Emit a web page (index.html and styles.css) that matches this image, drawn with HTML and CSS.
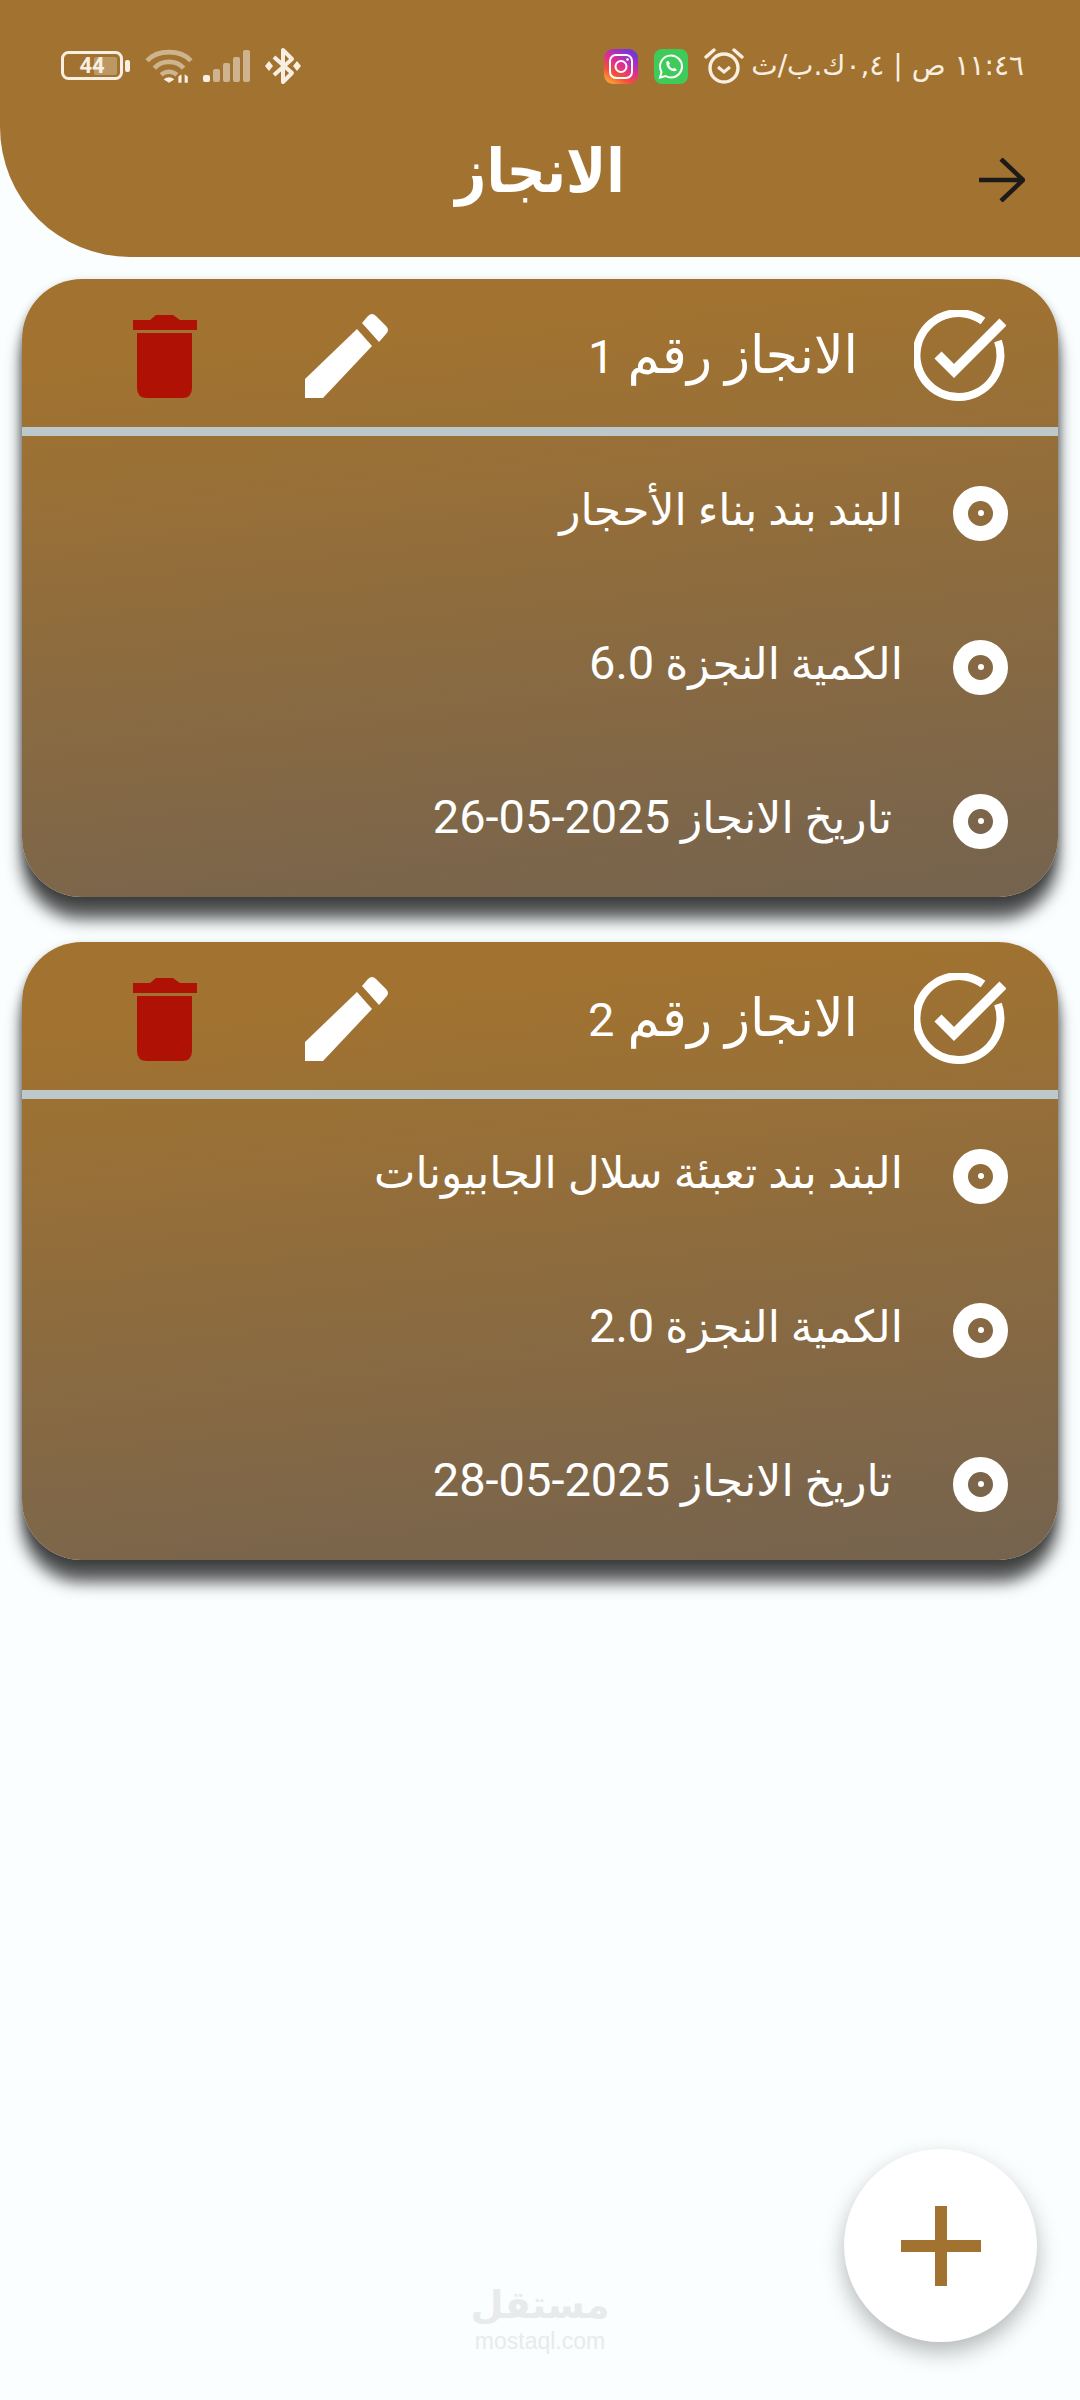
FILE: index.html
```html
<!DOCTYPE html>
<html lang="ar">
<head>
<meta charset="utf-8">
<title>الانجاز</title>
<link rel="stylesheet" href="styles.css">
</head>
<body>
<div class="screen">
  <header class="appbar">
    <div class="status">
      <div class="status-left">
        <svg class="i-battery" viewBox="0 0 70 30"><rect x="1.500" y="1.500" width="59" height="26" rx="6" fill="none" stroke="#f8efe2" stroke-width="3"/><rect x="33" y="6" width="23" height="18" rx="2" fill="#f8efe2" opacity=".3"/><rect x="64" y="9" width="5" height="12" rx="2" fill="#f8efe2"/><text x="31" y="22" text-anchor="middle" class="batt-text">44</text></svg>
        <svg class="i-wifi" viewBox="0 0 46 34"><g fill="none" stroke="#cdb48e" stroke-width="4.500"><path d="M2 12 C12 1 34 1 44 12"/><path d="M9 19 C16 11 30 11 37 19"/></g><path d="M14 24 C19 19 27 19 32 24 L29 27 C25 24 21 24 17 27Z" fill="#cdb48e"/><path d="M18 30 C21 27 25 27 28 30 L23 33Z" fill="#f8efe2"/><path d="M32 33 L32 27 L35 25 L35 33Z M38 33 L38 25 L41 27 L41 33Z" fill="#f8efe2"/></svg>
        <svg class="i-signal" viewBox="0 0 47 32"><rect x="0" y="25" width="7" height="7" rx="2" fill="#f8efe2"/><rect x="10" y="19" width="7" height="13" rx="2" fill="#cdb48e"/><rect x="20" y="13" width="7" height="19" rx="2" fill="#cdb48e"/><rect x="30" y="7" width="7" height="25" rx="2" fill="#cdb48e"/><rect x="40" y="0" width="7" height="32" rx="2" fill="#cdb48e"/></svg>
        <svg class="i-bt" viewBox="0 0 36 38"><path d="M9 10 L27 26 L18 35 L18 3 L27 12 L9 28" fill="none" stroke="#f8efe2" stroke-width="4" stroke-linejoin="round"/><path d="M4 14 L8 19 L4 24 L0 19Z M32 14 L36 19 L32 24 L28 19Z" fill="#f8efe2"/></svg>
      </div>
      <div class="status-right">
        <svg class="i-app" viewBox="0 0 34 35"><defs><linearGradient id="ig" x1="0" y1="1" x2=".6" y2="0"><stop offset="0" stop-color="#fdc12f"/><stop offset=".35" stop-color="#f5503a"/><stop offset=".65" stop-color="#d92e97"/><stop offset="1" stop-color="#7a35d8"/></linearGradient></defs><rect width="34" height="35" rx="9" fill="url(#ig)"/><rect x="6" y="6" width="22" height="23" rx="6" fill="none" stroke="#fff" stroke-width="2"/><circle cx="17" cy="17.500" r="5.500" fill="none" stroke="#fff" stroke-width="2"/><circle cx="23.500" cy="10.500" r="1.300" fill="#fff"/></svg>
        <svg class="i-app" viewBox="0 0 34 35"><rect width="34" height="35" rx="8" fill="#3ecb5a"/><path d="M17 6.500 a11 11 0 0 1 0 22 a11 11 0 0 1 -5.500 -1.500 L6 28.500 L7.500 23 a11 11 0 0 1 9.500 -16.500Z" fill="none" stroke="#fff" stroke-width="2"/><path d="M13 12 C11.500 14 12.500 17 15 20 C18 22.500 21 23 23 21 L20.500 18.800 L19 19.800 C17 19 15.500 17.500 15 16 L16 14.800 L14.500 12Z" fill="#fff"/></svg>
        <svg class="i-alarm" viewBox="0 0 40 38"><circle cx="20" cy="21" r="14" fill="none" stroke="#f8efe2" stroke-width="3.400"/><path d="M14 20 L20 25 L26 20" fill="none" stroke="#f8efe2" stroke-width="3"/><path d="M2 10 L10 3 M38 10 L30 3" stroke="#f8efe2" stroke-width="3.400" stroke-linecap="round"/></svg>
        <span class="status-text" dir="rtl">١١:٤٦ ص | ٠,٤ك.ب/ث</span>
      </div>
    </div>
    <div class="titlebar">
      <span></span>
      <h1 class="title" dir="rtl">الانجاز</h1>
      <svg class="i-arrow" viewBox="0 0 46 44"><path d="M0 22 H43 M22 1 L44 22 L22 43" fill="none" stroke="#1c1b1a" stroke-width="4.500"/></svg>
    </div>
  </header>

  <main class="list">
    <article class="card">
      <div class="card-head">
        <svg class="i-check" viewBox="0 0 92 92"><path d="M69 11 A42 42 0 1 0 84 31" fill="none" stroke="#fff" stroke-width="8"/><path d="M24 45 L40 61 L89 12" fill="none" stroke="#fff" stroke-width="10"/></svg>
        <h2 class="card-title">الانجاز رقم <bdi class="num">1</bdi></h2>
        <svg class="i-pencil" viewBox="0 0 83 84"><path d="M0 65 L52 15 L67 32 L18 84 L0 84Z" fill="#fff"/><path d="M57 9 L63 2 Q67 -2 71 2 L81 12 Q85 16 81 20 L74 28Z" fill="#fff"/></svg>
        <svg class="i-trash" viewBox="0 0 64 83"><path d="M0 5 H17 L23 0 H40 L47 5 H64 V15 H0Z" fill="#b01105"/><path d="M4 18 H59 V73 Q59 83 49 83 H14 Q4 83 4 73Z" fill="#b01105"/></svg>
      </div>
      <div class="divider"></div>
      <div class="row"><span class="dot"><span class="dot-core"></span></span><p class="row-text">البند بند بناء الأحجار</p></div>
      <div class="row"><span class="dot"><span class="dot-core"></span></span><p class="row-text">الكمية النجزة <bdi class="num">6.0</bdi></p></div>
      <div class="row"><span class="dot"><span class="dot-core"></span></span><p class="row-text">&nbsp;تاريخ الانجاز <bdi class="num" dir="ltr">26-05-2025</bdi></p></div>
    </article>

    <article class="card">
      <div class="card-head">
        <svg class="i-check" viewBox="0 0 92 92"><path d="M69 11 A42 42 0 1 0 84 31" fill="none" stroke="#fff" stroke-width="8"/><path d="M24 45 L40 61 L89 12" fill="none" stroke="#fff" stroke-width="10"/></svg>
        <h2 class="card-title">الانجاز رقم <bdi class="num">2</bdi></h2>
        <svg class="i-pencil" viewBox="0 0 83 84"><path d="M0 65 L52 15 L67 32 L18 84 L0 84Z" fill="#fff"/><path d="M57 9 L63 2 Q67 -2 71 2 L81 12 Q85 16 81 20 L74 28Z" fill="#fff"/></svg>
        <svg class="i-trash" viewBox="0 0 64 83"><path d="M0 5 H17 L23 0 H40 L47 5 H64 V15 H0Z" fill="#b01105"/><path d="M4 18 H59 V73 Q59 83 49 83 H14 Q4 83 4 73Z" fill="#b01105"/></svg>
      </div>
      <div class="divider"></div>
      <div class="row"><span class="dot"><span class="dot-core"></span></span><p class="row-text">البند بند تعبئة سلال الجابيونات</p></div>
      <div class="row"><span class="dot"><span class="dot-core"></span></span><p class="row-text">الكمية النجزة <bdi class="num">2.0</bdi></p></div>
      <div class="row"><span class="dot"><span class="dot-core"></span></span><p class="row-text">&nbsp;تاريخ الانجاز <bdi class="num" dir="ltr">28-05-2025</bdi></p></div>
    </article>
  </main>

  <div class="watermark">
    <span class="wm-ar" dir="rtl">مستقل</span>
    <span class="wm-en">mostaql.com</span>
  </div>
  <button class="fab" aria-label="add"><svg class="i-plus" viewBox="0 0 80 80"><path d="M34 0 H46 V34 H80 V46 H46 V80 H34 V46 H0 V34 H34Z" fill="#a27330"/></svg></button>
</div>
</body>
</html>
```

FILE: styles.css
```css
* { box-sizing: border-box; }
html, body { margin: 0; padding: 0; }
body { font-family: "Roboto", "DejaVu Sans", sans-serif; background: #fafeff; }
.screen { position: relative; width: 1080px; height: 2400px; overflow: hidden; background: #fafeff; }

.appbar { height: 257px; background: #a27330; border-bottom-left-radius: 130px; }
.status { height: 130px; padding: 45px 56px 0 61px; display: flex; justify-content: space-between; align-items: flex-start; }
.status-left, .status-right { display: flex; align-items: center; height: 42px; }
.i-battery { width: 70px; height: 30px; margin-right: 14px; }
.batt-text { font: 700 22px "Roboto", sans-serif; fill: #f8efe2; }
.i-wifi { width: 48px; height: 36px; margin-right: 10px; }
.i-signal { width: 47px; height: 32px; margin-right: 15px; }
.i-bt { width: 36px; height: 38px; }
.i-app { width: 34px; height: 35px; margin-right: 16px; }
.i-alarm { width: 40px; height: 38px; margin-right: 7px; }
.status-text { font-size: 28px; color: #f8efe2; line-height: 42px; font-family: "DejaVu Sans", sans-serif; }

.titlebar { display: grid; grid-template-columns: 1fr auto 1fr; align-items: center; padding: 0 55px; height: 90px; margin-top: -3px; }
.title { margin: 0; font-size: 54px; font-weight: 700; color: #fff; line-height: 80px; transform: scaleY(1.12); }
.i-arrow { width: 46px; height: 44px; justify-self: end; margin-top: 16px; }

.list { padding: 22px 22px 0; display: flex; flex-direction: column; gap: 45px; }
.card { height: 618px; border-radius: 60px; background: linear-gradient(174deg, #a27330 12%, #75634f 100%); box-shadow: 0 22px 16px rgba(0,0,0,.68), 0 4px 10px rgba(0,0,0,.3); color: #fff; }
.card-head { height: 148px; padding: 6px 52px 0 111px; display: flex; flex-direction: row-reverse; align-items: center; }
.i-check { width: 92px; height: 92px; margin-top: -1px; flex: none; }
.card-title { margin: 0 56px 0 auto; font-size: 52px; font-weight: 400; line-height: 60px; direction: rtl; }
.i-pencil { width: 83px; height: 84px; margin-left: 108px; flex: none; }
.i-trash { width: 64px; height: 83px; flex: none; }
.divider { height: 9px; background: #bcc8c9; }
.row { height: 154px; padding-right: 50px; display: flex; flex-direction: row-reverse; align-items: center; }
.dot { width: 55px; height: 55px; border-radius: 50%; border: 15px solid #fff; display: flex; align-items: center; justify-content: center; }
.dot-core { width: 6px; height: 6px; border-radius: 50%; background: #fff; flex: none; }
.row-text { margin: 0 50px 7px 0; font-size: 44px; line-height: 56px; direction: rtl; }
.num { font-size: 47px; }

.watermark { position: absolute; left: 470px; top: 2282px; width: 140px; display: flex; flex-direction: column; align-items: center; color: #e8eaec; }
.wm-ar { font-size: 38px; font-weight: 700; line-height: 46px; height: 46px; }
.wm-en { font-size: 23px; line-height: 26px; font-family: "Liberation Sans", sans-serif; }
.fab { position: absolute; left: 844px; top: 2149px; width: 193px; height: 193px; padding: 0; border: 0; border-radius: 50%; background: #fff; box-shadow: 0 10px 22px rgba(0,0,0,.28); display: flex; align-items: center; justify-content: center; }
.i-plus { width: 80px; height: 80px; }
```
